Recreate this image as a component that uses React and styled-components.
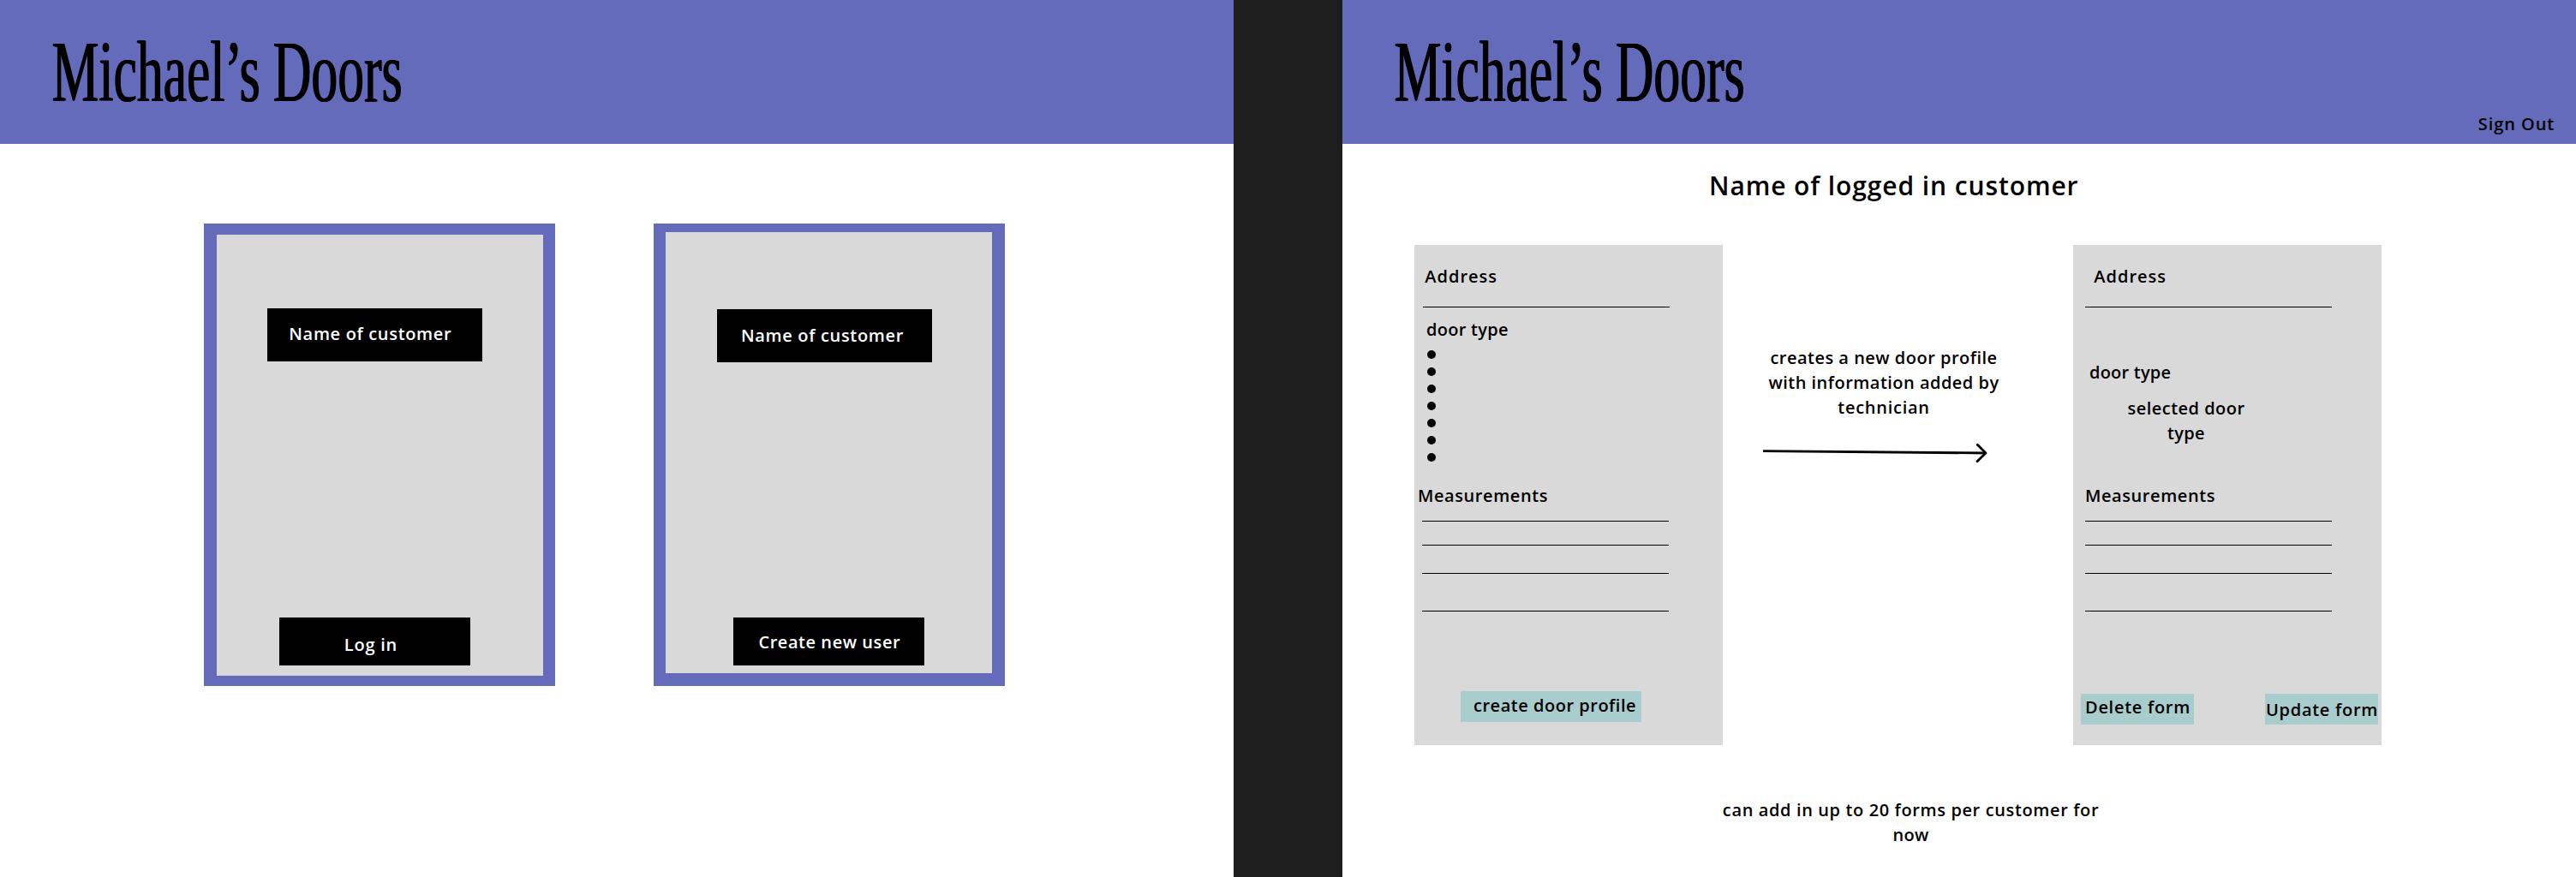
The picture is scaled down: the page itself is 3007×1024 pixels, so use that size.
import React from "react";
import styled, { createGlobalStyle } from "styled-components";

const colors = {
  brand: "#636bba",
  gutter: "#1e1e1e",
  panel: "#d9d9d9",
  action: "#a9cccd",
};

const GlobalStyle = createGlobalStyle`
  body {
    margin: 0;
    background: ${colors.gutter};
    color: #000;
    font-family: "Open Sans", "Noto Sans", sans-serif;
  }
`;

const Board = styled.div`
  display: flex;
  gap: 127px;
  width: 3007px;
  height: 1024px;
  overflow: hidden;
`;

const Screen = styled.section`
  flex: none;
  width: 1440px;
  height: 1024px;
  background: #fff;
`;

const Header = styled.header`
  box-sizing: border-box;
  display: flex;
  justify-content: space-between;
  height: 168px;
  padding: 33px 24.8px 9px 59.5px;
  background: ${colors.brand};
`;

const Brand = styled.h1`
  width: 408px;
  margin: 0;
  font-family: "Liberation Serif", serif;
  font-size: 102px;
  font-weight: 400;
  line-height: 102px;
  text-shadow: 1px 0 #000, 2px 0 #000;
  white-space: nowrap;
  transform: scaleX(0.604);
  transform-origin: left;
`;

const Text = styled.div`
  margin: ${(p) => p.$top || 0}px 0 0 ${(p) => p.$left || 0}px;
  font-size: 20px;
  font-weight: 600;
  line-height: 29px;
  letter-spacing: ${(p) => p.$track || 0}px;
  white-space: nowrap;
`;

const SignOut = styled(Text)`
  align-self: flex-end;
`;

const Heading = styled(Text).attrs({ as: "h2" })`
  font-size: 30px;
  line-height: 44px;
`;

const Centered = styled.div`
  width: ${(p) => p.$width}px;
  margin: ${(p) => p.$top}px 0 0 ${(p) => p.$left || 0}px;
  text-align: center;
`;

const Cards = styled.div`
  display: flex;
  gap: 115px;
  padding: 93px 0 0 238px;
`;

const Card = styled.div`
  box-sizing: border-box;
  width: 410px;
  height: 540px;
  padding: ${(p) => p.$inset};
  background: ${colors.brand};
`;

const CardBody = styled.div`
  display: flow-root;
  height: 515px;
  background: ${colors.panel};
`;

const BlackButton = styled.div`
  box-sizing: border-box;
  display: flex;
  width: ${(p) => p.$width}px;
  height: ${(p) => p.$height}px;
  margin: ${(p) => p.$top}px 0 0 ${(p) => p.$left}px;
  background: #000;
  color: #fff;
`;

const Workspace = styled.div`
  display: flex;
  padding: 47px 0 0 84px;
`;

const Form = styled.div`
  display: flow-root;
  width: 360px;
  height: 584px;
  background: ${colors.panel};
`;

const Rule = styled.div`
  width: 288px;
  height: 1px;
  margin: ${(p) => p.$top}px 0 0 ${(p) => p.$left}px;
  background: #000;
`;

const Dots = styled.div`
  display: grid;
  gap: 10px;
  margin: 10px 0 0 15px;
`;

const Dot = styled.span`
  width: 10px;
  height: 10px;
  border-radius: 50%;
  background: #000;
`;

const Actions = styled.div`
  display: flex;
  gap: 83px;
  margin: ${(p) => p.$top}px 0 0 ${(p) => p.$left}px;
`;

const Action = styled.div`
  display: flex;
  flex: none;
  width: ${(p) => p.$width}px;
  height: 36px;
  background: ${colors.action};
`;

const Step = styled.div`
  width: 409px;
`;

const Arrow = styled.svg`
  display: block;
  margin: 20px 0 0 39px;
`;

const measurementGaps = [15, 27, 32, 43];

function Measurements({ labelTop, labelLeft, ruleLeft }) {
  return (
    <>
      <Text $top={labelTop} $left={labelLeft} $track={0.57}>Measurements</Text>
      {measurementGaps.map((gap) => (
        <Rule key={gap} $top={gap} $left={ruleLeft} />
      ))}
    </>
  );
}

function LoginScreen() {
  return (
    <Screen>
      <Header>
        <Brand>Michael’s Doors</Brand>
      </Header>
      <Cards>
        <Card $inset="13px 14px 12px 15px">
          <CardBody>
            <BlackButton $width={251} $height={62} $top={86} $left={59}>
              <Text $top={15} $left={25.3} $track={0.66}>Name of customer</Text>
            </BlackButton>
            <BlackButton $width={223} $height={56} $top={299} $left={73}>
              <Text $top={17} $left={75.8} $track={0.76}>Log in</Text>
            </BlackButton>
          </CardBody>
        </Card>
        <Card $inset="10px 15px 15px 14px">
          <CardBody>
            <BlackButton $width={251} $height={62} $top={90} $left={60}>
              <Text $top={16} $left={28} $track={0.66}>Name of customer</Text>
            </BlackButton>
            <BlackButton $width={223} $height={56} $top={298} $left={79}>
              <Text $top={14} $left={29.4} $track={0.56}>Create new user</Text>
            </BlackButton>
          </CardBody>
        </Card>
      </Cards>
    </Screen>
  );
}

function CustomerScreen() {
  return (
    <Screen>
      <Header>
        <Brand>Michael’s Doors</Brand>
        <SignOut $track={0.94}>Sign Out</SignOut>
      </Header>
      <Heading $top={27} $left={428} $track={0.9}>Name of logged in customer</Heading>
      <Workspace>
        <Form>
          <Text $top={22} $left={12.3} $track={1}>Address</Text>
          <Rule $top={21} $left={10} />
          <Text $top={11} $left={14} $track={0.27}>door type</Text>
          <Dots>
            {Array.from({ length: 7 }, (_, i) => <Dot key={i} />)}
          </Dots>
          <Measurements labelTop={25} labelLeft={4} ruleLeft={9} />
          <Actions $top={93} $left={54}>
            <Action $width={211}>
              <Text $top={2} $left={15} $track={0.52}>create door profile</Text>
            </Action>
          </Actions>
        </Form>
        <Step>
          <Centered $top={117} $width={376}>
            <Text $track={0.49}>creates a new door profile</Text>
            <Text $track={0.48}>with information added by</Text>
            <Text $track={0.72}>technician</Text>
          </Centered>
          <Arrow width="280" height="40" viewBox="0 0 280 40" fill="none" stroke="#000" strokeWidth="2.8">
            <path d="M8 16.7L268 19" />
            <path d="M258.3 9.3L268 19L258 28.7" strokeLinecap="round" strokeLinejoin="round" />
          </Arrow>
        </Step>
        <Form>
          <Text $top={22} $left={24.3} $track={1}>Address</Text>
          <Rule $top={21} $left={14} />
          <Text $top={61} $left={19} $track={0.22}>door type</Text>
          <Centered $top={13} $left={52} $width={160}>
            <Text $track={0.48}>selected door</Text>
            <Text $track={0.3}>type</Text>
          </Centered>
          <Measurements labelTop={44} labelLeft={14} ruleLeft={14} />
          <Actions $top={96} $left={9}>
            <Action $width={132}>
              <Text $top={1} $left={5} $track={0.72}>Delete form</Text>
            </Action>
            <Action $width={132}>
              <Text $top={4} $left={1} $track={0.72}>Update form</Text>
            </Action>
          </Actions>
        </Form>
      </Workspace>
      <Centered $top={61} $width={1327}>
        <Text $track={0.62}>can add in up to 20 forms per customer for</Text>
        <Text $track={0.2}>now</Text>
      </Centered>
    </Screen>
  );
}

export default function App() {
  return (
    <>
      <GlobalStyle />
      <Board>
        <LoginScreen />
        <CustomerScreen />
      </Board>
    </>
  );
}
